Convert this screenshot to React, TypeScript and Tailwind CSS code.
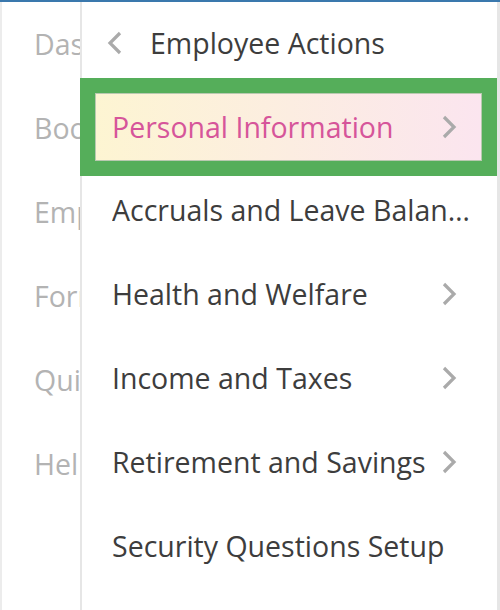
import React from 'react';

const sideItems = ['Dashboard', 'Books', 'Employees', 'Forms', 'Quick Links', 'Help'];

const Chevron = ({ dir = 'right' }: { dir?: 'left' | 'right' }) => (
    <svg width="16" height="24" viewBox="0 0 16 24" fill="none" className="shrink-0">
        <path
            d={dir === 'right' ? 'M3 2 L13 12 L3 22' : 'M13 2 L3 12 L13 22'}
            stroke="#aaaaaa"
            strokeWidth="3.2"
        />
    </svg>
);

const Row = ({ label, arrow = true }: { label: string; arrow?: boolean }) => (
    <div className={`flex h-[84px] items-center pl-[30px] ${arrow ? 'pr-[40px]' : 'pr-[18px]'}`}>
        <span className="min-w-0 flex-1 truncate text-[28.5px] text-[#3d3d3d]">{label}</span>
        {arrow && <Chevron />}
    </div>
);

export default function App() {
    return (
        <div
            className="flex h-[610px] w-[500px] overflow-hidden border-t-2 border-[#3a78ad] bg-white"
            style={{ fontFamily: '"Open Sans", "Noto Sans", sans-serif' }}
        >
            {/* sidebar behind */}
            <div className="flex w-[80px] shrink-0 flex-col overflow-hidden border-l-2 border-[#ececec]">
                {sideItems.map((s) => (
                    <div key={s} className="flex h-[84px] items-center whitespace-nowrap pl-[32px] text-[28.5px] text-[#b3b3b3]">
                        {s}
                    </div>
                ))}
            </div>

            {/* flyout panel */}
            <div className="flex min-w-0 flex-1 flex-col border-l-2 border-r-[3px] border-[#e6e6e6]">
                <div className="flex h-[76px] items-center gap-[27px] pl-[25px] pt-[6px]">
                    <Chevron dir="left" />
                    <span className="text-[28.5px] text-[#3d3d3d]">Employee Actions</span>
                </div>

                <div className="-ml-[2px] mb-[-8px] border-[15px] border-[#55ae5a]">
                    <div className="flex h-[68px] items-center border border-[#b9c9b0] bg-gradient-to-r from-[#fdf5d2] to-[#fbe5ef] pl-[16px] pr-[24px]">
                        <span className="min-w-0 flex-1 truncate text-[28.5px] text-[#d6559a]">Personal Information</span>
                        <Chevron />
                    </div>
                </div>

                <Row label="Accruals and Leave Balances" arrow={false} />
                <Row label="Health and Welfare" />
                <Row label="Income and Taxes" />
                <Row label="Retirement and Savings" />
                <Row label="Security Questions Setup" arrow={false} />
            </div>
        </div>
    );
}
